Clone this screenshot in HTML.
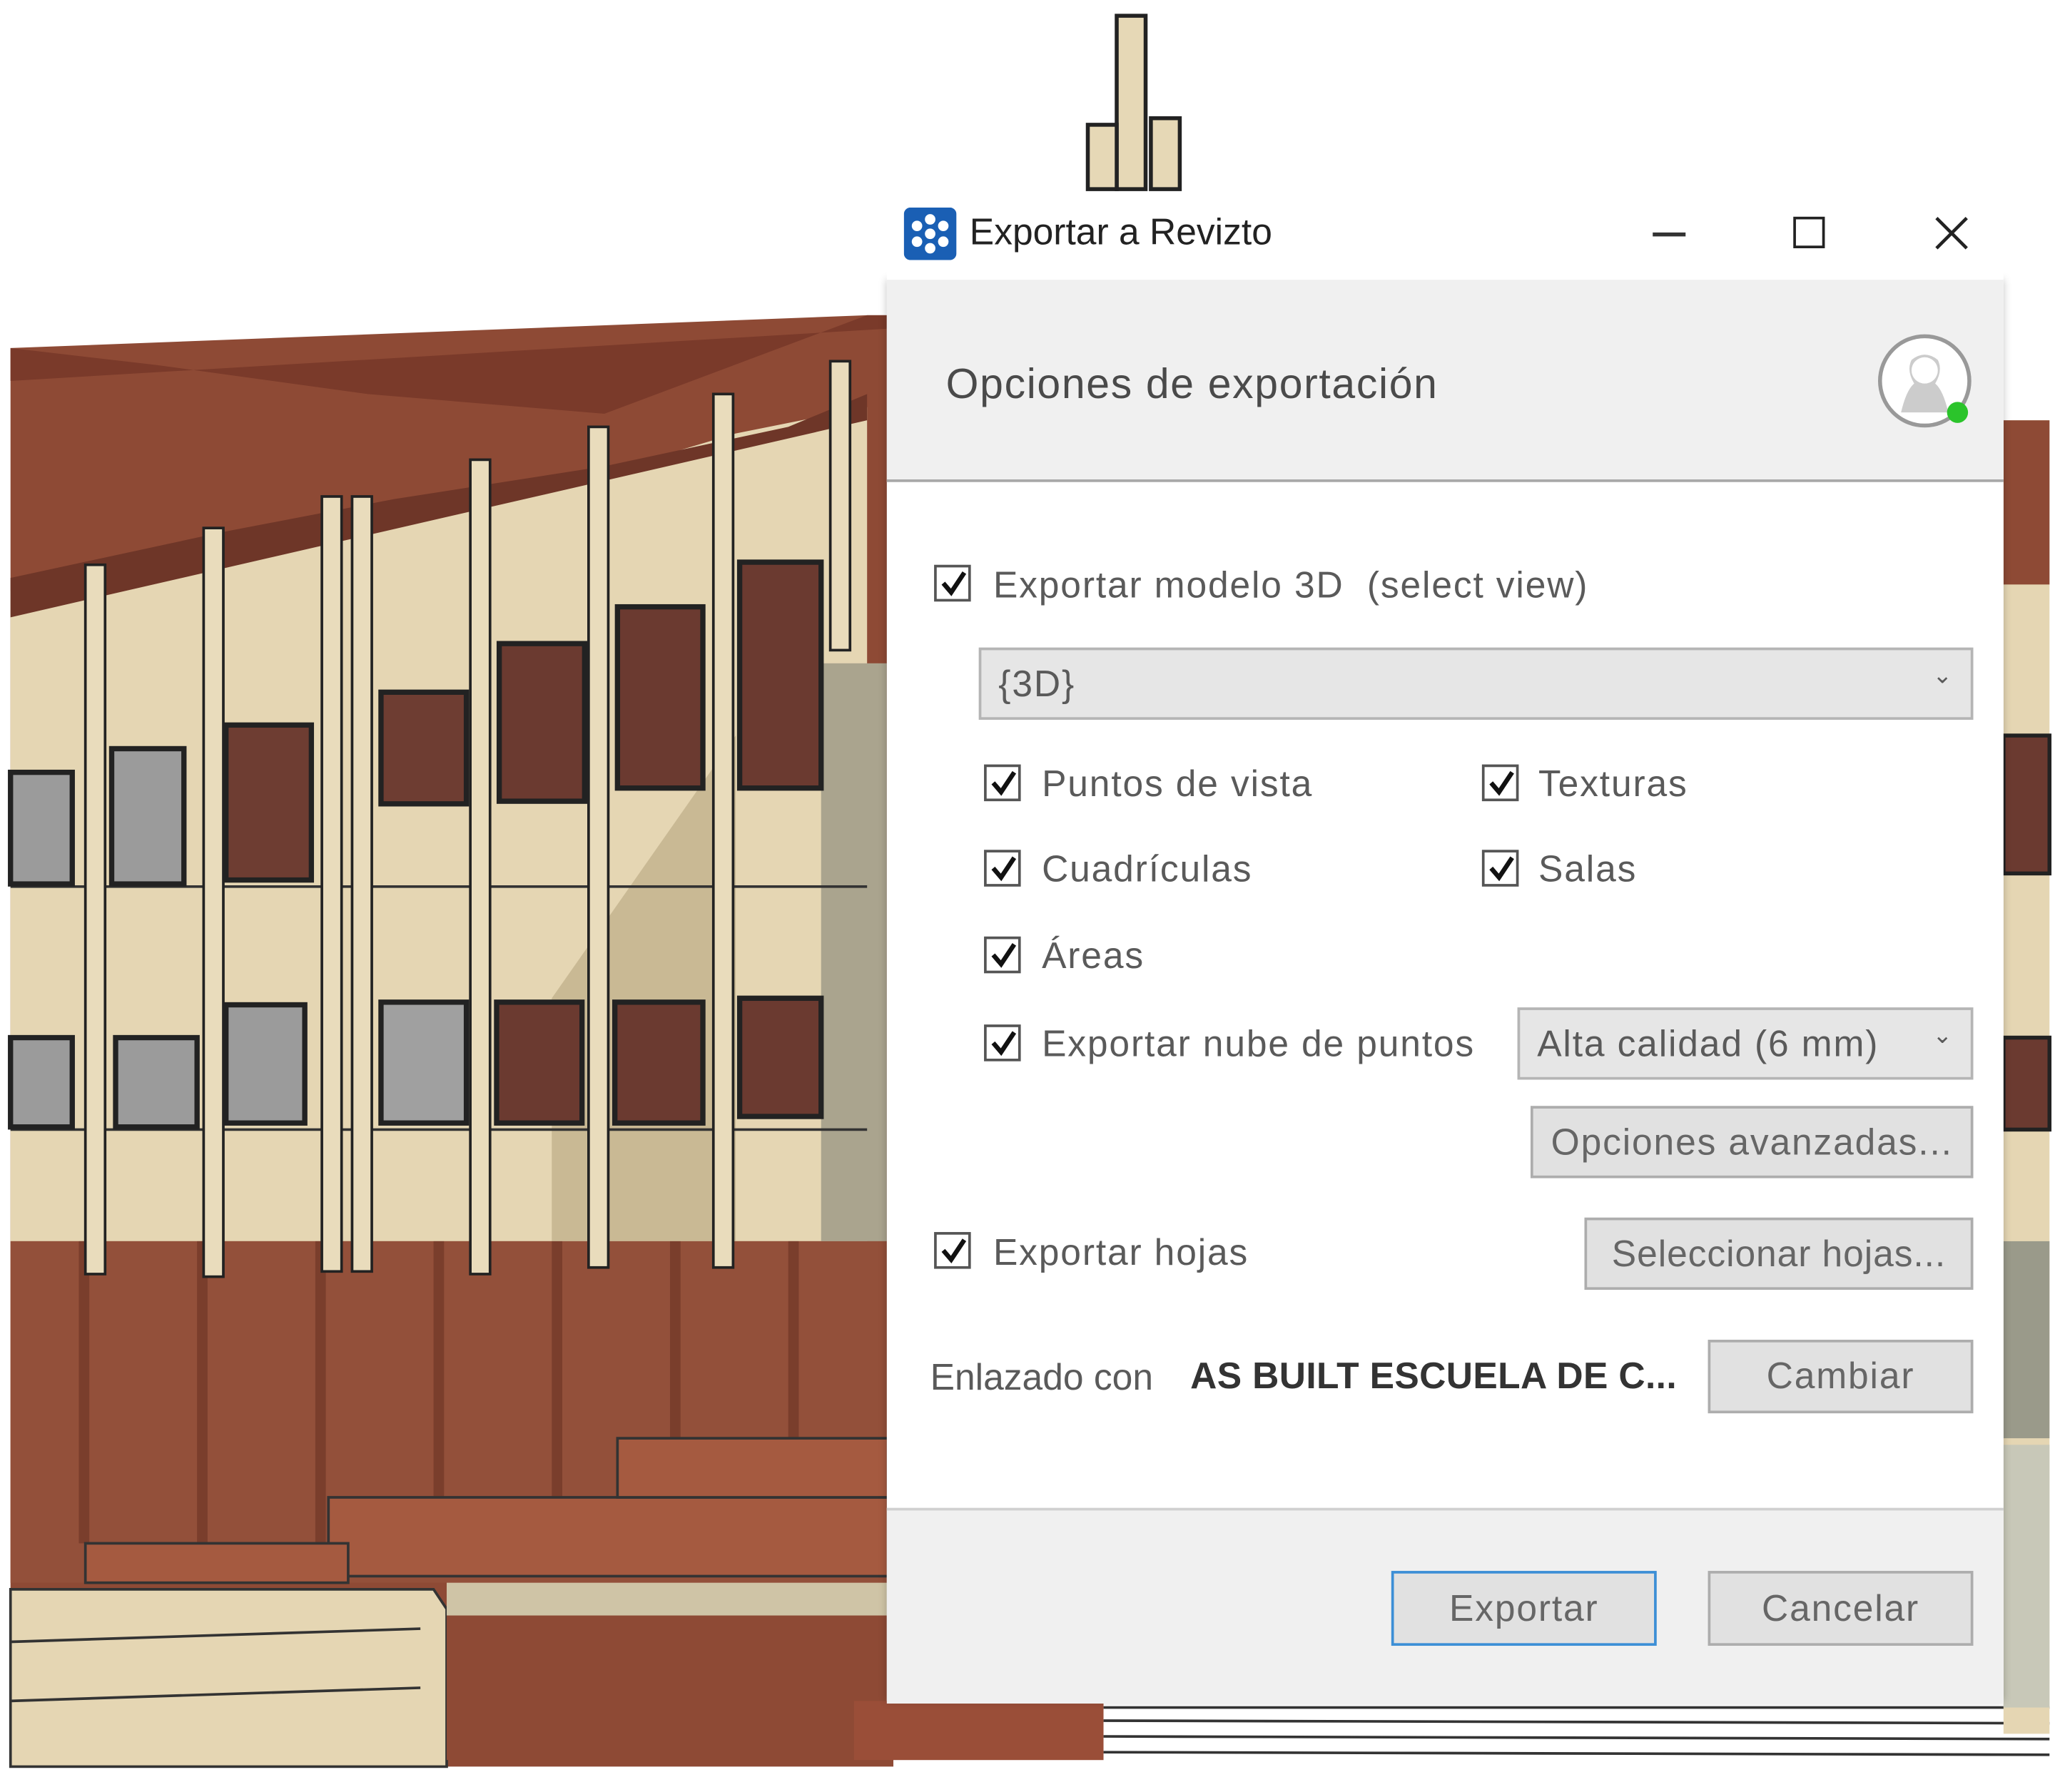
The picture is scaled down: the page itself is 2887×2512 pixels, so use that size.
<!DOCTYPE html>
<html><head><meta charset="utf-8"><style>
html,body{margin:0;padding:0;background:#fff;overflow:hidden}
#s{position:absolute;left:0;top:0;width:1568px;height:1364px;transform:scale(1.8412);transform-origin:0 0;font-family:"Liberation Sans",sans-serif}
.a{position:absolute}
.cb{position:absolute;width:28px;height:28px;border:2px solid #555;background:#fff;box-sizing:border-box}
.cb svg{position:absolute;left:2px;top:1px}
.t{position:absolute;font-size:28px;color:#5a5a5a;white-space:nowrap;line-height:1;letter-spacing:1px}
.btn{position:absolute;background:#e1e1e1;border:2px solid #adadad;box-sizing:border-box;font-size:28px;color:#666;text-align:center;letter-spacing:1px}
</style></head><body><div id="s">
<svg class="a" style="left:0;top:0" width="1568" height="1364">
<rect x="850" y="12" width="22" height="132" fill="#e6d8b6" stroke="#222" stroke-width="3"/>
<rect x="828" y="95" width="22" height="49" fill="#e6d8b6" stroke="#222" stroke-width="3"/>
<rect x="876" y="90" width="22" height="54" fill="#e6d8b6" stroke="#222" stroke-width="3"/>
<polygon points="8,265 660,240 680,240 680,1345 8,1345" fill="#8e4a35"/>
<polygon points="8,265 120,278 280,300 460,315 660,240 680,240 680,250 8,290" fill="#7a3a2a"/>
<polygon points="8,450 160,410 300,385 460,360 560,330 660,310 660,945 8,945" fill="#e5d6b3"/>
<polygon points="8,440 170,405 300,380 460,355 600,325 660,300 660,320 8,470" fill="#6e3628"/>
<polygon points="420,760 560,560 560,945 420,945" fill="#c9b994"/>
<rect x="625" y="505" width="50" height="440" fill="#aaa48e"/>
<line x1="8" y1="675" x2="660" y2="675" stroke="#333" stroke-width="2"/>
<line x1="8" y1="860" x2="660" y2="860" stroke="#333" stroke-width="2"/>
<g stroke="#222" stroke-width="4">
<rect x="8" y="588" width="47" height="85" fill="#9b9b9b"/>
<rect x="85" y="570" width="55" height="103" fill="#9b9b9b"/>
<rect x="172" y="552" width="65" height="118" fill="#6e3d32"/>
<rect x="290" y="527" width="65" height="85" fill="#6e3d32"/>
<rect x="380" y="490" width="65" height="120" fill="#6b3a30"/>
<rect x="470" y="462" width="65" height="138" fill="#6b3a30"/>
<rect x="563" y="428" width="62" height="172" fill="#6b3a30"/>
<rect x="8" y="790" width="47" height="68" fill="#9b9b9b"/>
<rect x="88" y="790" width="62" height="68" fill="#9b9b9b"/>
<rect x="172" y="765" width="60" height="90" fill="#9b9b9b"/>
<rect x="290" y="763" width="65" height="92" fill="#a0a0a0"/>
<rect x="378" y="763" width="65" height="92" fill="#6b3a30"/>
<rect x="468" y="763" width="67" height="92" fill="#6b3a30"/>
<rect x="563" y="760" width="62" height="90" fill="#6b3a30"/>
</g>
<rect x="8" y="945" width="668" height="260" fill="#93503a"/>
<g fill="#7a3e2c"><rect x="60" y="945" width="8" height="230"/><rect x="150" y="945" width="8" height="230"/><rect x="240" y="945" width="8" height="230"/><rect x="330" y="945" width="8" height="230"/><rect x="420" y="945" width="8" height="230"/><rect x="510" y="945" width="8" height="230"/><rect x="600" y="945" width="8" height="230"/></g>
<rect x="250" y="1140" width="426" height="60" fill="#a55a40" stroke="#333" stroke-width="2"/>
<rect x="470" y="1095" width="206" height="45" fill="#a55a40" stroke="#333" stroke-width="2"/>
<rect x="65" y="1175" width="200" height="30" fill="#a55a40" stroke="#333" stroke-width="2"/>
<g fill="#e9dcbc" stroke="#222" stroke-width="2">
<rect x="65" y="430" width="15" height="540"/><rect x="155" y="402" width="15" height="570"/>
<rect x="245" y="378" width="15" height="590"/><rect x="268" y="378" width="15" height="590"/>
<rect x="358" y="350" width="15" height="620"/><rect x="448" y="325" width="15" height="640"/>
<rect x="543" y="300" width="15" height="665"/><rect x="632" y="275" width="15" height="220"/>
</g>
<polygon points="8,1210 330,1210 340,1225 340,1345 8,1345" fill="#e5d6b3" stroke="#333" stroke-width="2"/>
<line x1="8" y1="1250" x2="320" y2="1240" stroke="#333" stroke-width="2"/>
<line x1="8" y1="1295" x2="320" y2="1285" stroke="#333" stroke-width="2"/>
<rect x="340" y="1205" width="340" height="25" fill="#cfc4a6"/>
<rect x="340" y="1230" width="340" height="110" fill="#8e4a35"/>
<rect x="650" y="1295" width="190" height="45" fill="#9a4e38"/>
<rect x="840" y="1295" width="720" height="45" fill="#fff"/>
<g stroke="#333" stroke-width="2"><line x1="840" y1="1300" x2="1560" y2="1300"/><line x1="840" y1="1310" x2="1560" y2="1312"/><line x1="840" y1="1322" x2="1560" y2="1324"/><line x1="840" y1="1334" x2="1560" y2="1336"/></g>
<rect x="1525" y="320" width="35" height="1000" fill="#e5d6b3"/>
<rect x="1525" y="320" width="35" height="125" fill="#8e4a35"/>
<rect x="1525" y="560" width="35" height="105" fill="#6b3a30" stroke="#222" stroke-width="3"/>
<rect x="1525" y="790" width="35" height="70" fill="#6b3a30" stroke="#222" stroke-width="3"/>
<rect x="1525" y="945" width="35" height="150" fill="#9a9a8a"/>
<rect x="1525" y="1100" width="35" height="200" fill="#c8c8b8"/>
</svg>

<div class="a" style="left:675px;top:213px;width:850px;height:1082px;background:#fff;box-shadow:0 0 6px rgba(0,0,0,0.25)"></div>
<div class="a" style="left:675px;top:150px;width:850px;height:63px;background:#fff"></div>
<svg class="a" style="left:688px;top:158px" width="40" height="40"><rect width="40" height="40" rx="5" fill="#1a5fb4"/><g fill="#fff"><circle cx="20" cy="20" r="4"/><circle cx="20" cy="9" r="4"/><circle cx="20" cy="31" r="4"/><circle cx="10" cy="14" r="4"/><circle cx="30" cy="14" r="4"/><circle cx="10" cy="26" r="4"/><circle cx="30" cy="26" r="4"/></g></svg>
<div class="t" style="left:738px;top:163px;font-size:28px;color:#222;letter-spacing:0">Exportar a Revizto</div>
<div class="a" style="left:1258px;top:177px;width:25px;height:3px;background:#333"></div>
<div class="a" style="left:1365px;top:165px;width:24px;height:24px;border:2px solid #222;box-sizing:border-box"></div>
<svg class="a" style="left:1472px;top:164px" width="27" height="27"><path d="M2 2L25 25M25 2L2 25" stroke="#222" stroke-width="2.5"/></svg>
<div class="a" style="left:675px;top:213px;width:850px;height:152px;background:#f0f0f0;border-bottom:2px solid #a8a8a8"></div>
<div class="t" style="left:720px;top:276px;font-size:32px;color:#4a4a4a;letter-spacing:0.9px">Opciones de exportación</div>
<svg class="a" style="left:1425px;top:252px" width="85" height="80"><circle cx="40" cy="38" r="34" fill="#fff" stroke="#999" stroke-width="3"/><path d="M22 62 Q26 45 32 40 Q26 30 30 22 Q40 14 50 22 Q54 30 48 40 Q54 45 58 62" fill="#ccc"/><circle cx="40" cy="30" r="10" fill="#fff"/><circle cx="65" cy="62" r="8" fill="#2bc42b"/></svg>
<div class="a" style="left:675px;top:1148px;width:850px;height:147px;background:#f0f0f0;border-top:2px solid #d0d0d0"></div>

<div class="cb" style="left:711px;top:430px"><svg width="22" height="22"><path d="M3 11L9 18L19 3" stroke="#111" stroke-width="3.5" fill="none"/></svg></div>
<div class="t" style="left:756px;top:432px">Exportar modelo 3D&nbsp; (select view)</div>
<div class="a" style="left:745px;top:493px;width:757px;height:55px;background:#e6e6e6;border:2px solid #b5b5b5;box-sizing:border-box"></div>
<div class="t" style="left:760px;top:507px">{3D}</div>
<div class="t" style="left:1471px;top:505px;font-size:18px">&#8964;</div>

<div class="cb" style="left:749px;top:582px"><svg width="22" height="22"><path d="M3 11L9 18L19 3" stroke="#111" stroke-width="3.5" fill="none"/></svg></div>
<div class="t" style="left:793px;top:583px">Puntos de vista</div>
<div class="cb" style="left:1128px;top:582px"><svg width="22" height="22"><path d="M3 11L9 18L19 3" stroke="#111" stroke-width="3.5" fill="none"/></svg></div>
<div class="t" style="left:1171px;top:583px">Texturas</div>
<div class="cb" style="left:749px;top:647px"><svg width="22" height="22"><path d="M3 11L9 18L19 3" stroke="#111" stroke-width="3.5" fill="none"/></svg></div>
<div class="t" style="left:793px;top:648px">Cuadrículas</div>
<div class="cb" style="left:1128px;top:647px"><svg width="22" height="22"><path d="M3 11L9 18L19 3" stroke="#111" stroke-width="3.5" fill="none"/></svg></div>
<div class="t" style="left:1171px;top:648px">Salas</div>
<div class="cb" style="left:749px;top:713px"><svg width="22" height="22"><path d="M3 11L9 18L19 3" stroke="#111" stroke-width="3.5" fill="none"/></svg></div>
<div class="t" style="left:793px;top:714px">Áreas</div>
<div class="cb" style="left:749px;top:780px"><svg width="22" height="22"><path d="M3 11L9 18L19 3" stroke="#111" stroke-width="3.5" fill="none"/></svg></div>
<div class="t" style="left:793px;top:781px">Exportar nube de puntos</div>
<div class="a" style="left:1155px;top:767px;width:347px;height:55px;background:#e6e6e6;border:2px solid #b5b5b5;box-sizing:border-box"></div>
<div class="t" style="left:1170px;top:781px">Alta calidad (6 mm)</div>
<div class="t" style="left:1471px;top:779px;font-size:18px">&#8964;</div>
<div class="btn" style="left:1165px;top:842px;width:337px;height:55px;line-height:51px">Opciones avanzadas...</div>

<div class="cb" style="left:711px;top:938px"><svg width="22" height="22"><path d="M3 11L9 18L19 3" stroke="#111" stroke-width="3.5" fill="none"/></svg></div>
<div class="t" style="left:756px;top:940px">Exportar hojas</div>
<div class="btn" style="left:1206px;top:927px;width:296px;height:55px;line-height:51px;letter-spacing:0.5px">Seleccionar hojas...</div>

<div class="t" style="left:708px;top:1035px;letter-spacing:0">Enlazado con</div>
<div class="t" style="left:906px;top:1034px;font-weight:bold;color:#333;letter-spacing:0.2px">AS BUILT ESCUELA DE C...</div>
<div class="btn" style="left:1300px;top:1020px;width:202px;height:56px;line-height:52px">Cambiar</div>

<div class="btn" style="left:1059px;top:1196px;width:202px;height:57px;line-height:53px;border-color:#3c8fd6">Exportar</div>
<div class="btn" style="left:1300px;top:1196px;width:202px;height:57px;line-height:53px">Cancelar</div>
</div></body></html>
